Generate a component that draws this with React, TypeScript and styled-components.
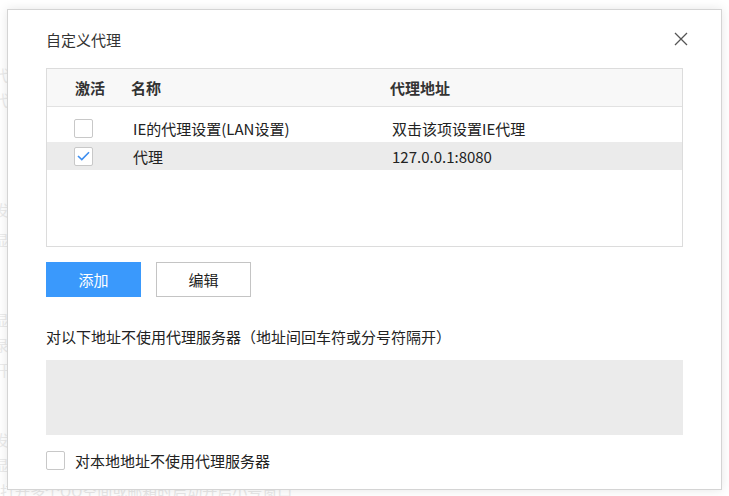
import React from 'react'
import styled, { createGlobalStyle } from 'styled-components'

const GlobalStyle = createGlobalStyle`
  html, body {
    margin: 0;
    padding: 0;
    background: #ffffff;
  }
  body {
    font-family: "Noto Sans CJK SC", "Noto Sans", "Liberation Sans", sans-serif;
    color: #333;
  }
`

// faint text of the settings page behind the dialog
const ghostLines = [
  { top: 64, text: '代' },
  { top: 3, text: '代' },
  { top: 88, text: '发' },
  { top: 8, text: '显' },
  { top: 58, text: '显' },
  { top: 3, text: '录' },
  { top: 3, text: '开' },
  { top: 48, text: '发' },
  { top: 3, text: '显' },
]

const rows = [
  { checked: false, name: 'IE的代理设置(LAN设置)', addr: '双击该项设置IE代理', active: false },
  { checked: true, name: '代理', addr: '127.0.0.1:8080', active: true },
]

const App = () => {
  return (
    <Page>
      <GlobalStyle />
      <Backdrop>
        {ghostLines.map((l, i) => (
          <GhostLine key={i} mt={l.top}>{l.text}</GhostLine>
        ))}
        <GhostFooter>打开多个QQ空间或邮箱时启动开启小号窗口</GhostFooter>
      </Backdrop>
      <Dialog>
        <TitleBar>
          <Title>自定义代理</Title>
          <Close>
            <svg width="14" height="14" viewBox="0 0 14 14">
              <path d="M1 1L13 13M13 1L1 13" stroke="#555" strokeWidth="1.3" fill="none" />
            </svg>
          </Close>
        </TitleBar>
        <Table>
          <HeadRow>
            <HeadCell>激活</HeadCell>
            <HeadCell>名称</HeadCell>
            <HeadCell>代理地址</HeadCell>
          </HeadRow>
          <Body>
            {rows.map((r, i) => (
              <Row key={i} active={r.active}>
                <CheckCell>
                  <Check>
                    {r.checked && (
                      <svg width="13" height="10" viewBox="0 0 13 10">
                        <path d="M1 5L4.8 8.6L12 1.2" stroke="#3d8ef0" strokeWidth="1.6" fill="none" />
                      </svg>
                    )}
                  </Check>
                </CheckCell>
                <Cell>{r.name}</Cell>
                <Cell>{r.addr}</Cell>
              </Row>
            ))}
          </Body>
        </Table>
        <Buttons>
          <Button primary>添加</Button>
          <Button>编辑</Button>
        </Buttons>
        <Label>对以下地址不使用代理服务器（地址间回车符或分号符隔开）</Label>
        <Bypass />
        <LocalRow>
          <Check />
          <LocalText>对本地地址不使用代理服务器</LocalText>
        </LocalRow>
      </Dialog>
    </Page>
  )
}

export default App

const Page = styled.div`
  position: relative;
  width: 729px;
  height: 496px;
  overflow: hidden;
`
const Backdrop = styled.div`
  display: flex;
  flex-direction: column;
`
const GhostLine = styled.div<{ mt: number }>`
  margin-top: ${({ mt }) => mt}px;
  margin-left: -6px;
  font-size: 15px;
  line-height: 22px;
  color: #ebebeb;
  white-space: nowrap;
`
const GhostFooter = styled.div`
  margin-top: 4px;
  font-size: 15px;
  line-height: 22px;
  color: #e8e8e8;
  white-space: nowrap;
`
const Dialog = styled.div`
  position: absolute;
  left: 7px;
  top: 9px;
  width: 637px;
  height: 479px;
  background: #fff;
  border: 1px solid #d4d4d4;
  box-shadow: 0 0 10px rgba(0, 0, 0, 0.1);
  padding: 0 38px;
`
const TitleBar = styled.div`
  height: 58px;
  display: flex;
  justify-content: space-between;
  align-items: flex-start;
`
const Title = styled.div`
  margin-top: 20px;
  font-size: 15px;
  line-height: 20px;
  color: #333;
`
const Close = styled.div`
  margin-top: 22px;
  margin-right: -5px;
  width: 14px;
  height: 14px;
  display: flex;
`
const Table = styled.div`
  height: 177px;
  border: 1px solid #dcdcdc;
  display: flex;
  flex-direction: column;
`
const HeadRow = styled.div`
  height: 37px;
  background: #f8f8f8;
  border-bottom: 1px solid #e2e2e2;
  display: grid;
  grid-template-columns: 56px 259px 1fr;
  align-items: center;
  padding-left: 28px;
`
const HeadCell = styled.div`
  font-size: 15px;
  font-weight: bold;
  color: #333;
`
const Body = styled.div`
  padding-top: 7px;
  display: flex;
  flex-direction: column;
`
const Row = styled.div<{ active: boolean }>`
  height: 28px;
  display: grid;
  grid-template-columns: 56px 259px 1fr;
  align-items: center;
  padding-left: 27px;
  background: ${({ active }) => (active ? '#ebebeb' : 'transparent')};
`
const CheckCell = styled.div`
  display: flex;
  align-items: center;
`
const Cell = styled.div`
  padding-left: 3px;
  font-size: 15px;
  color: #222;
  white-space: nowrap;
`
const Check = styled.div`
  width: 17px;
  height: 17px;
  border: 1px solid #c8c8c8;
  border-radius: 2px;
  background: #fff;
  display: flex;
  align-items: center;
  justify-content: center;
  flex-shrink: 0;
`
const Buttons = styled.div`
  display: flex;
  gap: 15px;
  margin-top: 15px;
`
const Button = styled.div<{ primary?: boolean }>`
  width: ${({ primary }) => (primary ? '95px' : '93px')};
  height: ${({ primary }) => (primary ? '35px' : '33px')};
  background: ${({ primary }) => (primary ? '#3a99fc' : '#fff')};
  border: ${({ primary }) => (primary ? 'none' : '1px solid #c4c4c4')};
  color: ${({ primary }) => (primary ? '#fff' : '#222')};
  font-size: 15px;
  display: flex;
  align-items: center;
  justify-content: center;
`
const Label = styled.div`
  margin-top: 30px;
  font-size: 15px;
  line-height: 20px;
  color: #222;
  white-space: nowrap;
`
const Bypass = styled.div`
  margin-top: 13px;
  height: 75px;
  background: #ebebeb;
`
const LocalRow = styled.div`
  margin-top: 15px;
  display: flex;
  align-items: center;
  gap: 10px;
`
const LocalText = styled.div`
  font-size: 15px;
  color: #222;
`
